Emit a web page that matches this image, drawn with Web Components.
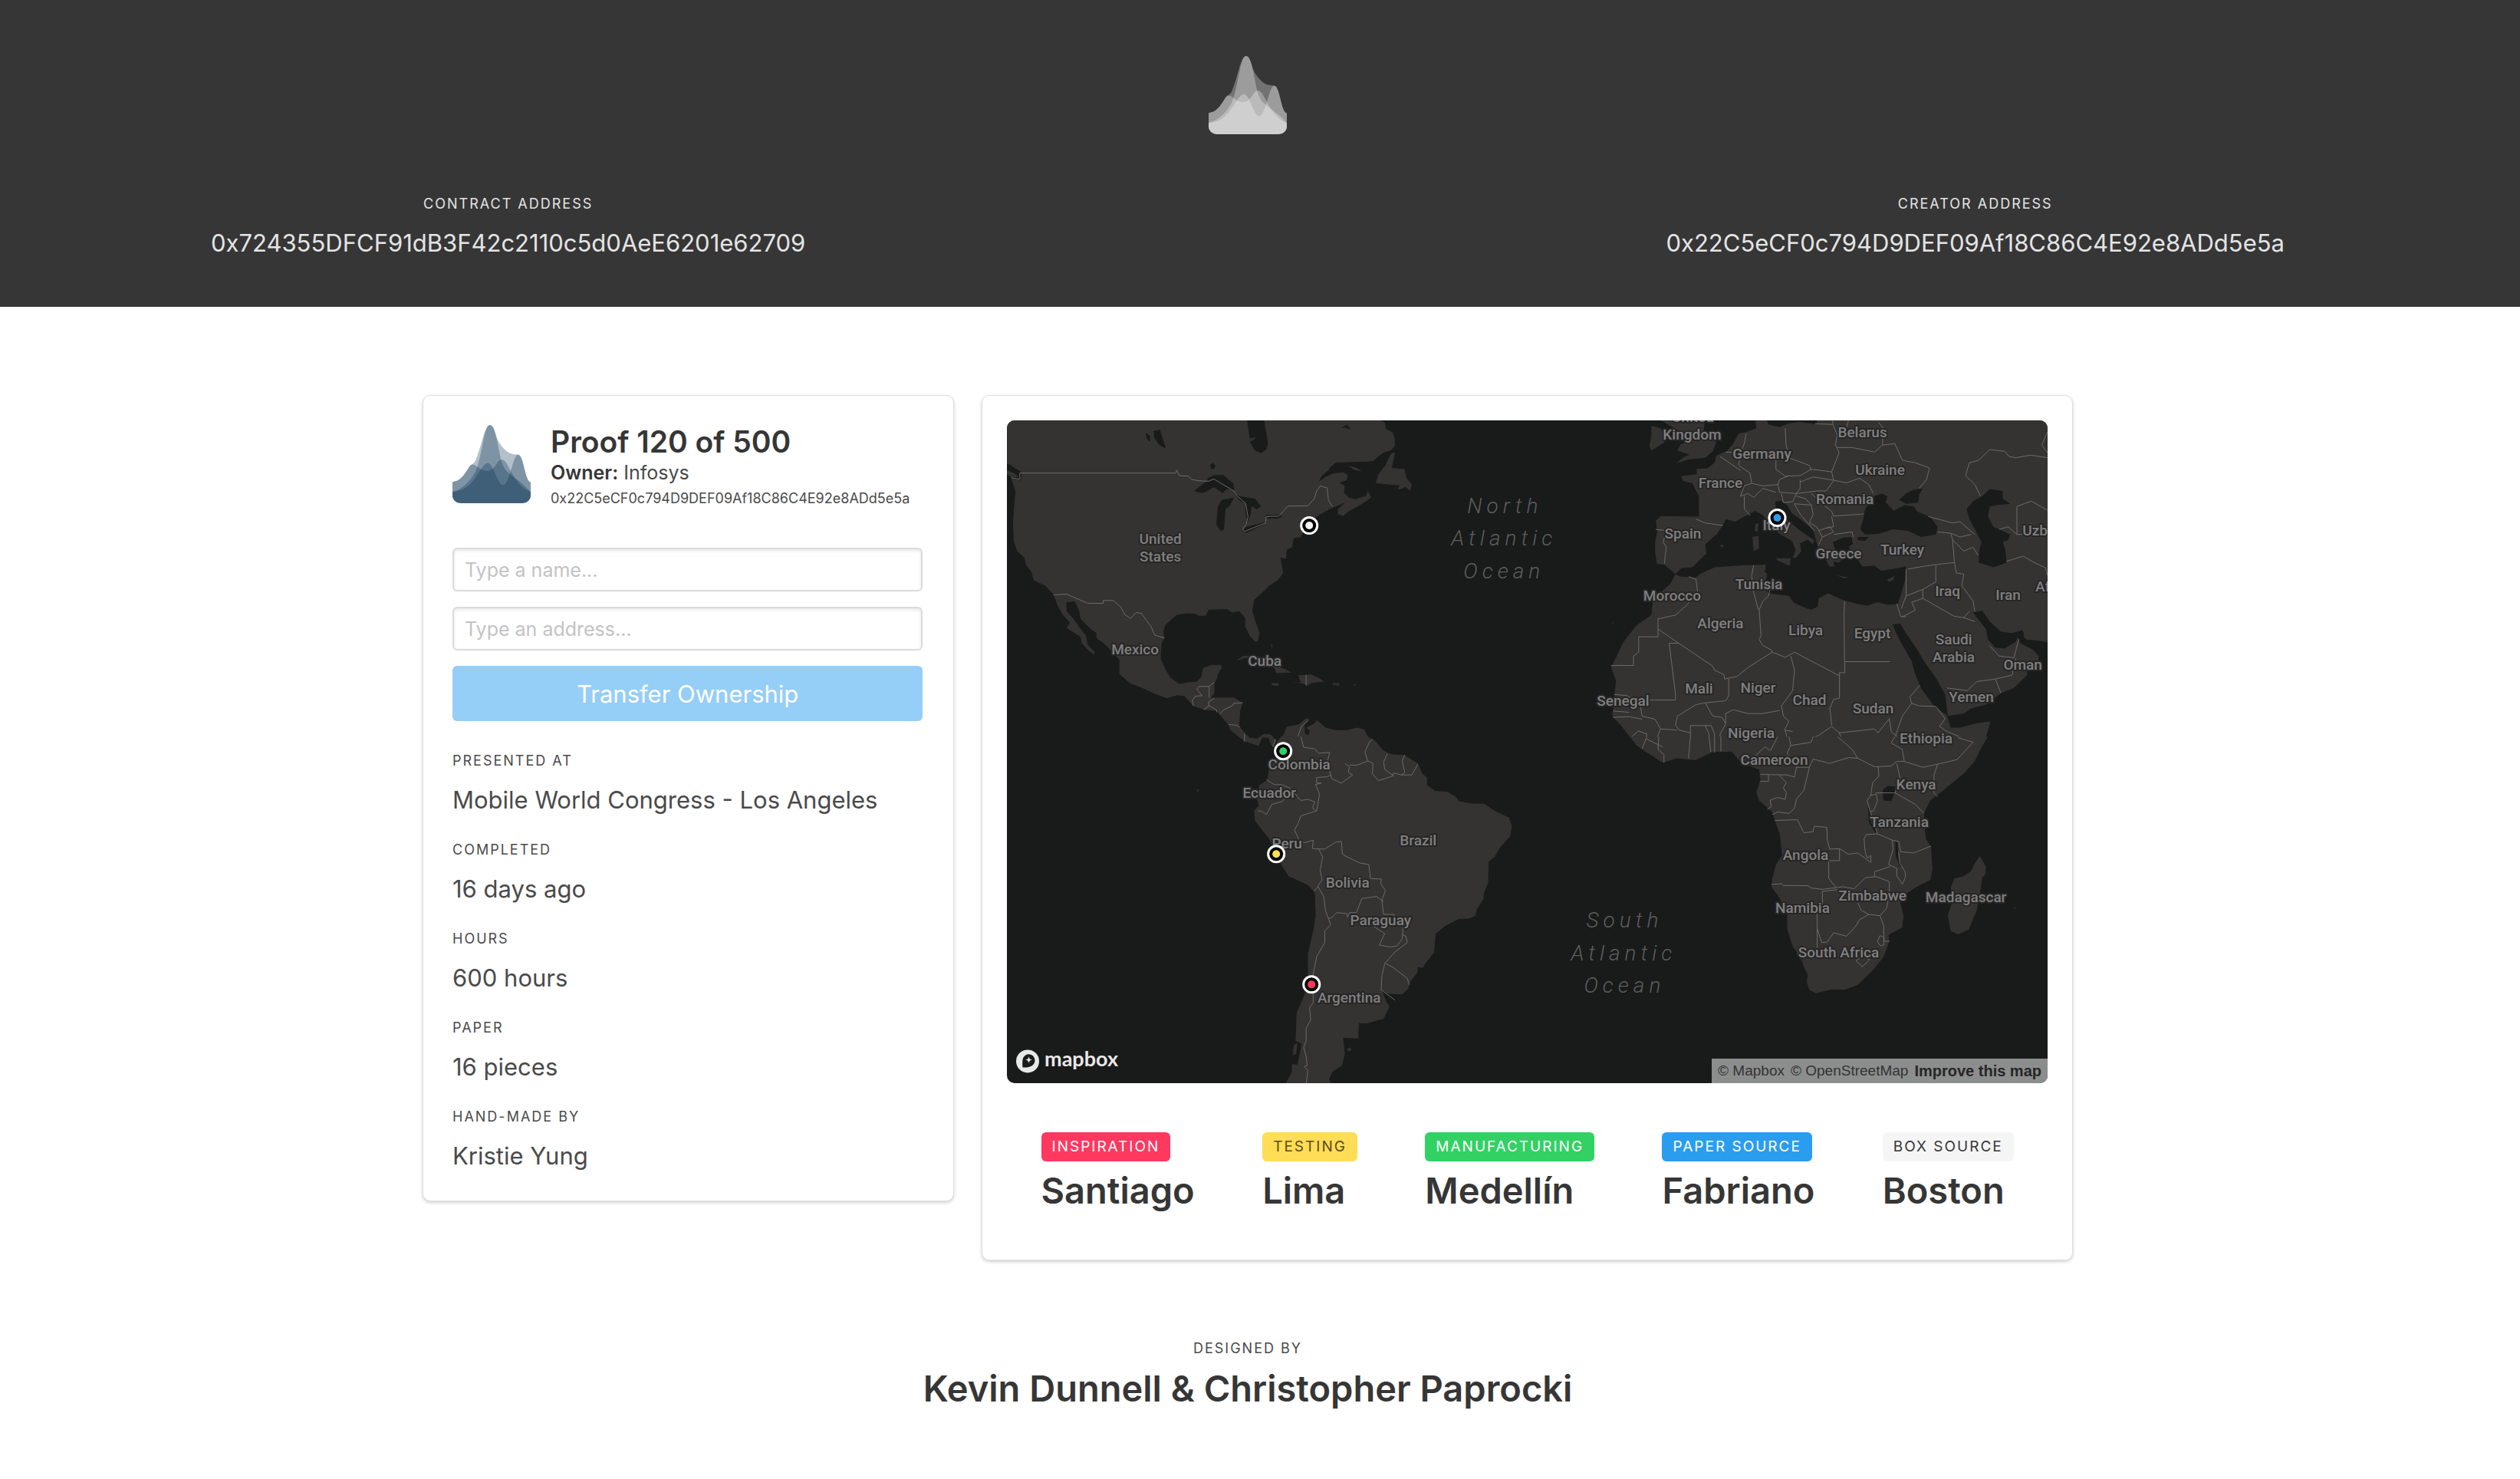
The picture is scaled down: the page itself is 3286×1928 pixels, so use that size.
<!DOCTYPE html>
<html lang="en">
<head>
<meta charset="utf-8">
<meta name="viewport" content="width=device-width, initial-scale=1">
<title>Proof 120 of 500</title>
<style>
  :root {
    --ink: #363636;
    --text: #4a4a4a;
    --gutter: 32px;
    --label-size: 18px;
    --value-size: 31px;
    --title-size: 47px;
  }
  body {
    margin: 0;
    background: #fff;
    color: var(--text);
    font-family: Inter, "Liberation Sans", sans-serif;
  }
  main {
    box-sizing: border-box;
    padding: 115px var(--gutter) 50px 0;
  }
</style>
</head>
<body>
<site-hero>
  <labeled-value centered label="Contract address">0x724355DFCF91dB3F42c2110c5d0AeE6201e62709</labeled-value>
  <labeled-value centered label="Creator address">0x22C5eCF0c794D9DEF09Af18C86C4E92e8ADd5e5a</labeled-value>
</site-hero>
<main>
  <proof-columns>
    <ui-card slot="side">
      <proof-head owner="Infosys" address="0x22C5eCF0c794D9DEF09Af18C86C4E92e8ADd5e5a">Proof 120 of 500</proof-head>
      <transfer-form></transfer-form>
      <fact-list>
        <labeled-value label="Presented at">Mobile World Congress - Los Angeles</labeled-value>
        <labeled-value label="Completed">16 days ago</labeled-value>
        <labeled-value label="Hours">600 hours</labeled-value>
        <labeled-value label="Paper">16 pieces</labeled-value>
        <labeled-value label="Hand-made by">Kristie Yung</labeled-value>
      </fact-list>
    </ui-card>
    <ui-card slot="main" wide>
      <journey-map></journey-map>
      <stop-list>
        <journey-stop tag="Inspiration" style="--tag:#ff3860;--tag-ink:#fff">Santiago</journey-stop>
        <journey-stop tag="Testing" style="--tag:#ffdd57;--tag-ink:#5a4c14">Lima</journey-stop>
        <journey-stop tag="Manufacturing" style="--tag:#32d164;--tag-ink:#fff">Medellín</journey-stop>
        <journey-stop tag="Paper source" style="--tag:#2b9dee;--tag-ink:#fff">Fabriano</journey-stop>
        <journey-stop tag="Box source" style="--tag:#f5f5f5;--tag-ink:#363636">Boston</journey-stop>
      </stop-list>
    </ui-card>
  </proof-columns>
  <site-credits label="Designed by">Kevin Dunnell &amp; Christopher Paprocki</site-credits>
</main>

<script>
const define = (name, html) => {
  const template = document.createElement('template');
  template.innerHTML = html;
  customElements.define(name, class extends HTMLElement {
    constructor() {
      super();
      this.attachShadow({ mode: 'open' }).append(template.content.cloneNode(true));
    }
    connectedCallback() {
      for (const node of this.shadowRoot.querySelectorAll('[data-attr]')) {
        node.textContent = this.getAttribute(node.dataset.attr) || '';
      }
    }
  });
};

/* Four translucent ridges stacked into one mountain. */
define('brand-mark', `
<style>
  :host { display: block; width: 102px; height: 102px; color: #022f50; }
  svg { display: block; width: 100%; height: 100%; }
</style>
<svg viewBox="108 68 306 308" preserveAspectRatio="none" aria-hidden="true">
  <clipPath id="base"><path d="M108 60H414V344A32 32 0 0 1 382 376H140A32 32 0 0 1 108 344Z"/></clipPath>
  <g fill="currentColor" fill-opacity=".3" clip-path="url(#base)">
    <path d="M108 292C142 290 160 254 174 232C182 220 190 226 200 204C222 150 234 68 254 68C276 68 272 112 294 142C314 172 332 184 362 184C388 184 390 288 414 293V376H108Z"/>
    <path d="M108 292C142 290 160 254 174 232C194 206 208 250 244 249C276 248 282 204 300 204C318 204 330 242 344 264C364 298 384 318 414 332V376H108Z"/>
    <path d="M108 332C150 318 186 286 204 236C226 176 232 68 254 68C282 68 288 190 306 228C324 268 362 272 414 332V376H108Z"/>
    <path d="M108 330C152 330 178 306 204 266C220 242 232 218 247 218C268 218 284 304 306 304C332 304 344 184 365 184C388 184 390 288 414 293V376H108Z"/>
  </g>
</svg>`);

define('labeled-value', `
<style>
  :host { display: block; }
  :host([centered]) { text-align: center; }
  dl, dd { margin: 0; }
  dt { font-size: var(--label-size); line-height: 28px; letter-spacing: 2px; text-transform: uppercase; margin-bottom: 13px; }
  dd { font-size: var(--value-size); line-height: 48px; }
</style>
<dl><dt data-attr="label"></dt><dd><slot></slot></dd></dl>`);

define('site-hero', `
<style>
  :host { display: block; }
  header { display: flex; flex-direction: column; align-items: center; gap: 77px; padding: 73px var(--gutter) 59px 0; background: #363636; color: #e4e4e4; }
  brand-mark { color: #fff; }
  .level { box-sizing: border-box; width: 100%; display: flex; justify-content: space-between; padding: 0 275px; }
</style>
<header>
  <brand-mark></brand-mark>
  <div class="level"><slot></slot></div>
</header>`);

define('proof-columns', `
<style>
  :host { display: grid; grid-template-columns: calc((100% + 36px) / 3 - 36px) 1fr; gap: 36px; align-items: start; max-width: 2152px; margin: 0 auto; }
</style>
<slot name="side"></slot><slot name="main"></slot>`);

define('ui-card', `
<style>
  :host { display: block; box-sizing: border-box; min-width: 0; border: 1px solid #dedede; border-radius: 10px; background: #fff; padding: 38px 40px 34px 38px; box-shadow: 0 2px 4px rgba(0,0,0,.18); }
  :host([wide]) { padding: 32px 32px 60px; }
</style>
<slot></slot>`);

define('proof-head', `
<style>
  :host { display: flex; gap: 26px; margin-bottom: 48px; }
  brand-mark { flex: none; }
  h1, p { margin: 0; }
  h1 { font-size: 39px; line-height: 44px; font-weight: 600; color: var(--ink); }
  .owner { font-size: 25px; line-height: 36px; }
  .address { font-size: 18px; line-height: 32px; }
  strong { font-weight: 600; color: var(--ink); }
</style>
<brand-mark></brand-mark>
<div>
  <h1><slot></slot></h1>
  <p class="owner"><strong>Owner:</strong> <span data-attr="owner"></span></p>
  <p class="address" data-attr="address"></p>
</div>`);

define('transfer-form', `
<style>
  :host { display: block; margin-bottom: 38px; }
  form { display: flex; flex-direction: column; gap: 20px; }
  input, button { box-sizing: border-box; width: 100%; border-radius: 6px; font-family: inherit; margin: 0; }
  input { height: 57px; border: 2px solid #dbdbdb; padding: 0 14px; font-size: 25px; color: var(--ink); background: #fff; box-shadow: inset 0 2px 4px rgba(10,10,10,.1); }
  input::placeholder { color: #c3c3c3; opacity: 1; }
  button { height: 72px; border: 0; padding: 0; background: #95cef6; color: #fff; font-size: var(--value-size); }
</style>
<form>
  <input type="text" aria-label="Name" placeholder="Type a name...">
  <input type="text" aria-label="Address" placeholder="Type an address...">
  <button type="button">Transfer Ownership</button>
</form>`);

define('fact-list', `
<style>
  :host { display: flex; flex-direction: column; gap: 27px; }
</style>
<slot></slot>`);

define('stop-list', `
<style>
  :host { display: flex; justify-content: space-around; margin-top: 64px; }
</style>
<slot></slot>`);

define('journey-stop', `
<style>
  :host { display: flex; flex-direction: column; align-items: flex-start; gap: 8px; }
  .tag { padding: 0 14px; border-radius: 6px; background: var(--tag); color: var(--tag-ink); font-size: 19px; line-height: 38px; letter-spacing: 2px; text-transform: uppercase; }
  h2 { margin: 0; font-size: var(--title-size); line-height: 60px; font-weight: 600; color: var(--ink); }
</style>
<span class="tag" data-attr="tag"></span>
<h2><slot></slot></h2>`);

define('site-credits', `
<style>
  :host { display: block; margin-top: 101px; text-align: center; }
  p, h2 { margin: 0; }
  p { font-size: var(--label-size); line-height: 28px; letter-spacing: 2px; text-transform: uppercase; margin-bottom: 8px; }
  h2 { font-size: var(--title-size); line-height: 60px; font-weight: 600; color: var(--ink); }
</style>
<p data-attr="label"></p>
<h2><slot></slot></h2>`);

/* Country names: text, centre x, baseline y. */
const countries = [
  ['United', 200, 161], ['States', 200, 184], ['Mexico', 167, 305], ['Cuba', 336, 320],
  ['United', 894, 2], ['Kingdom', 893, 25], ['Belarus', 1115, 22], ['Germany', 984, 50],
  ['Ukraine', 1138, 71], ['France', 930, 88], ['Romania', 1092, 109], ['Italy', 1003, 143],
  ['Spain', 881, 154], ['Greece', 1084, 180], ['Turkey', 1167, 175], ['Uzb', 1340, 150],
  ['Tunisia', 980, 220], ['Morocco', 867, 235], ['Iraq', 1226, 229],
  ['Iran', 1305, 234], ['Af', 1350, 223], ['Algeria', 930, 271], ['Libya', 1041, 280],
  ['Egypt', 1128, 284], ['Saudi', 1234, 292], ['Arabia', 1234, 315], ['Oman', 1324, 325],
  ['Mali', 902, 356], ['Niger', 979, 355], ['Chad', 1046, 371], ['Senegal', 803, 372],
  ['Sudan', 1129, 382], ['Yemen', 1257, 367], ['Nigeria', 970, 414], ['Ethiopia', 1198, 421],
  ['Cameroon', 1000, 449], ['Kenya', 1185, 481], ['Tanzania', 1163, 530], ['Angola', 1041, 573],
  ['Zimbabwe', 1128, 626], ['Namibia', 1037, 642], ['Madagascar', 1250, 628], ['South Africa', 1084, 700],
  ['Colombia', 381, 455], ['Ecuador', 342, 492], ['Peru', 365, 558], ['Brazil', 536, 554],
  ['Bolivia', 444, 609], ['Paraguay', 487, 658], ['Argentina', 446, 759]
];
const oceans = [
  ['North', 649, 121], ['Atlantic', 648, 163], ['Ocean', 648, 206],
  ['South', 805, 661], ['Atlantic', 804, 704], ['Ocean', 805, 746]
];
const pins = [
  [394, 137, '#f5f5f5'], [1004, 127, '#2b9dee'], [360, 431, '#32d164'], [351, 565, '#ffdd57'], [397, 735, '#ff3860']
];
const texts = list => list.map(([t, x, y]) => `<text x="${x}" y="${y}">${t}</text>`).join('');

define('journey-map', `
<style>
  :host { display: block; position: relative; overflow: hidden; border-radius: 10px; background: #191a1a; }
  svg { display: block; }
  .map { width: 100%; height: auto; }
  .land { fill: #343332; }
  .water { fill: #191a1a; }
  .border { fill: none; stroke: #6c6b6a; stroke-width: 1; }
  .land, .water, .border { vector-effect: non-scaling-stroke; }
  .country text { font: 500 19px Roboto, sans-serif; fill: #7f7f7f; stroke: #272626; stroke-width: 4px; stroke-linejoin: round; paint-order: stroke; text-anchor: middle; }
  .ocean text { font: italic 300 28px Roboto, sans-serif; letter-spacing: 6px; fill: #5c5d5d; text-anchor: middle; }
  .brand { font: 700 27px Lato, sans-serif; fill: #e8e8e8; }
  .credit { position: absolute; right: 0; bottom: 0; display: flex; gap: 8px; padding: 0 8px; background: #8c8d8d; font: 19px/32px "Liberation Sans", Arial, sans-serif; }
  .credit a { color: #333; text-decoration: none; }
  .credit span { display: flex; gap: 8px; }
  .credit a.fix { font-size: 20px; font-weight: 700; color: #262626; }
</style>
<svg class="map" viewBox="0 0 1356 864" role="img" aria-label="Map of the journey">
  <!-- North America, Caribbean -->
  <svg x="-44" y="-48" width="720" height="480" viewBox="0 0 1568 1440" preserveAspectRatio="none">
    <path class="land" d="M96 140H1150L1168 152 1172 178 1190 190 1197 215V245L1185 262 1165 270 1150 285 1135 303 1120 305 1030 309 1015 325 1008 340 990 360 980 384 1000 365 1025 350 1050 347 1063 358 1060 378 1040 388 1055 400 1052 425 1065 445 1085 452 1100 445 1115 440 1120 420 1130 445 1110 465 1085 485 1065 500 1050 518 1035 510V492L1055 465 1035 478 1020 485 1000 500 980 515 945 560 930 600 910 605 905 640 890 650 888 685 872 680 880 740 865 768 840 790 815 825 798 845 792 885 800 925 813 975 808 1008 800 1010 785 985 772 950V915L755 890 735 895 720 882 668 884 660 908 640 908 630 900 605 898 578 905 560 925 545 945 540 970 543 993 535 1015 532 1075 545 1115 560 1150 585 1175 610 1168 635 1165 648 1145 652 1112 675 1100 705 1100V1112L695 1135 690 1160 685 1170V1210L675 1228 740 1227 765 1248 758 1280 755 1338 770 1365 785 1385 805 1388 825 1370 845 1372 860 1395 855 1425 845 1412 838 1385 820 1385 810 1418 800 1412 770 1398 730 1355 725 1335 700 1295 690 1280 655 1275 625 1260 600 1222 580 1218 550 1230 515 1212 480 1190 445 1172 415 1135V1080L400 1055 370 1015 350 995V975L330 955 305 920 300 885 288 852 265 855V890L285 920 300 950 320 985 325 1020 345 1050 343 1060 325 1040 308 1015 305 990 265 955 275 935 255 905 240 870 228 825 205 790 172 770 165 735 150 710 145 680 125 655 115 615 113 540 120 420 108 370 135 378 137 352 103 316 96 316Z"/>
    <path class="land" d="M90 335L118 352 130 366 108 366 90 350ZM1062 320L1085 328 1103 342 1085 340ZM1142 390L1150 355 1170 320 1185 275 1197 268 1193 300 1188 330 1225 335 1230 370 1245 395 1240 420 1228 405 1205 415 1210 398 1180 395ZM745 1084L765 1065 800 1062 835 1085 870 1108 905 1130 860 1132 855 1112 820 1092 790 1070 765 1075ZM905 1168L930 1168 922 1140 960 1137 980 1150 997 1165 960 1170 948 1183 935 1172ZM845 1170L868 1172 865 1182 850 1180ZM1020 1170L1040 1172 1038 1180 1022 1178ZM845 1018L850 1022 848 1035ZM1080 1176H1085V1180H1080Z"/>
    <path class="land" d="M855 1440L862 1400 880 1375 890 1342 925 1332 945 1308 955 1312 940 1335 942 1368 950 1376 956 1358 945 1345 970 1328 975 1315 1000 1345 1030 1355 1060 1355 1090 1345 1110 1352 1120 1380 1140 1395 1168 1440Z"/>
    <path class="water" d="M777 140L785 215 803 210 795 222 785 228 800 262 817 272 832 258 837 235 825 140ZM512 185L530 180 537 210 547 254 528 240 514 212ZM490 192L502 205V228L492 215ZM673 318L680 310 688 322 683 335 674 332ZM627 420L650 395 665 380 665 370 685 358 710 358 738 390 742 418 720 412 708 428 683 405 665 420 650 428ZM695 480L705 455 740 446 730 475 716 490 712 570 703 578 690 550ZM740 425L755 440 800 450 817 480 805 492 790 478 788 510 778 545 772 500V470L755 455ZM763 575L775 560 800 552 830 540 825 552 775 584ZM830 515L870 512 878 520 865 528 832 528ZM1045 175L1060 160 1072 180 1055 172ZM105 318L135 345 137 378 128 375 128 355Z"/>
    <path class="border" d="M108 368L133 374 132 350H575L578 338 585 360 610 362 620 375 640 380 668 382 683 373 740 420 750 440 773 468 780 520 775 550 765 570 770 578 830 545 832 520 868 518 893 479 950 478 968 450 975 420 985 400 1005 408 1008 455 1020 482M228 826L265 823 325 859H369V848H398L420 875 430 903 447 918 462 895 477 898 505 950 515 983 543 995M625 1260L622 1240 630 1222 650 1220 635 1195 642 1184H670V1228M670 1182L685 1168M655 1275L670 1258 668 1245 685 1230M668 1258L690 1275 692 1285M700 1292L712 1275 735 1260 740 1250 765 1248M725 1333L745 1335 757 1342M770 1368V1400M850 1420L858 1390M945 1140V1178M950 1318L932 1340 922 1378 935 1412 965 1425 975 1440M1133 1392L1120 1412 1115 1440"/>
  </svg>
  <!-- Europe, North Africa, Middle East -->
  <svg x="646" y="-48" width="760" height="480" viewBox="0 0 1568 1440" preserveAspectRatio="none">
    <path class="land" d="M680 140L682 175 655 190 635 195 620 235 605 262 575 282 570 310 550 332 522 333V355L480 362 485 380 510 390 528 440V520L425 518 412 535 416 580 410 620V660L415 705 435 708 465 745 450 785 405 840 400 905 360 945 325 1010 292 1110 305 1160 300 1230 295 1300 320 1340 350 1395 385 1440H1280L1300 1380 1312 1320 1275 1328 1230 1345 1205 1345 1195 1300 1240 1290 1260 1270 1300 1255 1340 1210 1375 1190 1410 1140 1412 1110 1440 1090 1442 1065 1425 1040 1392 1015 1385 990 1398 985 1408 1000 1465 1010H1568V140Z"/>
    <path class="water" d="M465 745L480 722 510 718 530 690 548 665 545 628 575 590 592 555 600 530 625 540 650 520 680 498 700 515 725 565 750 592 778 615 788 650 780 682 790 680 803 655 800 625 820 610 835 628 838 612 805 580 775 545 752 515 735 485 733 462 748 458 765 475 780 510 805 535 835 572 842 610 850 650 865 680 880 715 892 715 890 695 905 700 910 690 895 655 888 620 915 603 938 600 942 625 930 640 950 665 955 690 968 715 1000 712 1018 732 1050 725 1085 715 1082 770 1072 820 1062 862 1035 865 1010 855 980 868 950 860 918 848 875 820 850 840 847 872 830 885 805 872 782 855 770 830 715 820 705 795 712 745 705 735 708 708 650 710 570 718 530 745 520 758 480 755ZM962 570L970 530 975 490 1000 440 1020 430 1035 440 1030 465 1052 497 1080 475 1105 480 1115 500 1150 522 1170 560 1165 590 1125 600 1090 575 1050 570 1010 588 975 590ZM1066 455L1085 430 1105 415 1130 410 1120 435 1118 465 1085 470ZM955 600L985 600 975 615 955 612ZM1248 490L1265 460 1290 440 1310 412 1345 420V450L1365 470 1330 475 1310 480 1305 520 1320 560 1335 570 1365 590 1360 610 1345 620 1352 650 1355 700 1320 718 1280 700 1282 650 1288 620 1270 570 1255 530ZM710 140L715 160 745 170 770 155 800 150 845 160V140ZM1265 895L1290 888 1310 930 1340 970 1370 975 1398 963 1403 985 1385 992 1380 1010 1350 1035 1325 1032 1305 1000 1300 960ZM1048 942L1070 938 1082 970 1115 1040 1135 1090 1165 1150 1190 1215 1197 1300 1160 1260 1125 1190 1108 1130 1100 1085 1070 1010Z"/>
    <path class="land" d="M400 165L425 175 437 200 435 230 400 262 395 245 400 200ZM420 140L545 140 540 190 575 230 565 265 545 290 500 297 467 312 485 290 502 278 470 262 480 235 505 230 500 205 480 190ZM735 683L775 683 772 712 740 692ZM672 600L688 595 690 645 675 655ZM680 550L688 545 686 580 678 575ZM898 750L930 758 920 762ZM1033 768L1055 752 1050 768 1040 775ZM583 635L592 630 595 640ZM295 935H299V938H295Z"/>
    <path class="border" d="M760 175L762 235 770 290 825 320 830 340M840 157L888 160 900 200 895 240 905 270 885 345M888 145V160M900 250L940 250 1000 268 1022 240V215L1035 195 1010 150M930 145L925 170M1022 240L1055 235 1075 300 1110 310 1148 330 1140 375 1120 410M655 195L650 235 640 270 635 320 665 350 670 390 650 400 640 440M600 268L645 270M585 285L610 310 640 340M735 300V335L760 362 800 360 830 335 885 345 890 378M670 390L700 400 740 395 745 375 770 360M740 395L745 425 790 430 800 410V375M800 385L835 365 890 378 925 388 960 370 985 395 997 430M890 380L870 420 845 420 790 430M640 440L660 430 675 445 700 410 735 425M650 440V490L665 515M520 530L545 545 592 555M412 570L440 575 432 620 440 640 435 705M750 430L755 465 780 462 790 430M785 470L830 475 835 510 825 545M785 470L800 510 838 575M830 430L860 470 885 500 890 518 970 510M885 518L890 560 870 565M830 475L815 450 790 440M825 545L845 560 860 600 850 630M850 575L880 560 890 580 860 600M890 590L940 580 943 600M1465 190L1450 240 1465 270M1465 290L1420 280 1380 290 1362 285 1350 265 1310 258 1280 300 1255 310 1245 360 1270 395 1285 440M1383 590V480L1422 460 1465 495M1335 570L1360 560 1383 590H1420V545M1355 695L1400 675 1430 700 1460 720 1465 750M1145 520L1210 545 1230 540 1270 590M1170 580L1205 585 1230 600 1260 590M1205 585L1210 610 1240 655 1265 640 1278 670M1210 610L1215 700M1090 725L1130 715 1180 705 1215 700 1220 740 1240 745 1235 790 1265 850 1270 890M1165 710V775L1130 805 1085 830M1085 725V830L1072 880M1130 805V840L1100 855 1110 885 1075 912M1130 840L1215 910 1240 915 1270 930M1240 915L1255 890M1060 860L1070 910 1085 912M1195 1190L1250 1200 1275 1165 1325 1155 1340 1210M1325 1155L1370 1140 1380 1075M1310 1025L1335 1065 1375 1072 1388 1000M500 755L520 765 525 820 492 870 465 905 418 920V990H366V1050L352 1065V1102H292M418 960L565 1105 570 1120 595 1138 597 1155 630 1145 660 1110 725 1050M475 1015H448L465 1215V1237H395M675 710L670 750 672 800 688 885M720 800L715 830 700 850 690 885 695 985 690 1000 700 1025 722 1040 725 1050 760 1070 785 1050 905 1142M920 850L918 900 920 1130H906V1230L890 1235 880 1270 885 1335M920 1087H1042M608 1155V1220L600 1240 545 1248 520 1255 470 1300 465 1335 475 1355 505 1365V1337H560M545 1248L565 1300 590 1305 600 1330V1290L620 1275 660 1290 700 1290 745 1278M775 1065L785 1120 780 1200 750 1260 755 1300 770 1320 758 1355 780 1360M760 1355L770 1412 800 1405 850 1375 885 1340 905 1365 940 1360 1000 1350 1010 1365 1040 1310 1045 1360 1060 1380M1122 1180L1095 1225 1100 1250 1075 1300 1058 1370V1400M1100 1250L1120 1260 1165 1262 1190 1310 1175 1340 1195 1360 1265 1403 1240 1440M300 1215L335 1220 370 1250 375 1300 410 1312 425 1350 470 1355M297 1305L340 1302 375 1312M297 1280L340 1285M348 1380L365 1358 388 1370 385 1410M425 1350L415 1385 425 1440M505 1365V1440M545 1337L555 1370V1440M560 1335L570 1370V1440M600 1330L585 1370 587 1440M905 1365L915 1400 940 1440"/>
  </svg>
  <!-- South America -->
  <svg x="-44" y="412" width="720" height="480" viewBox="0 0 1568 1440" preserveAspectRatio="none">
    <path class="land" d="M872 0H1120L1135 15 1165 55 1190 70 1225 72 1262 105 1275 145 1288 160V190L1312 213 1345 215 1370 235 1378 252 1415 262 1450 262 1480 290 1518 315 1529 350 1525 385 1495 435 1480 470 1463 490 1462 570 1450 610 1448 635 1430 675 1425 700 1410 711 1378 713 1340 740 1313 770 1308 845 1285 885 1275 905 1262 900 1262 920 1240 960 1235 985 1218 1008 1175 1005 1160 992 1172 1035 1182 1055 1165 1103 1118 1121 1095 1120 1093 1180 1050 1178 1055 1240 1047 1285 1020 1310 1010 1340 1018 1360V1440H885V1360L905 1310V1280L920 1282 930 1220 932 1200 915 1190 918 1080 940 1010 950 960V850L965 760 972 700 970 610 950 580 895 545 878 510 860 460 840 400 800 330 797 290 810 270 805 240 812 190 835 170 840 120 858 90 865 40ZM907 1245L910 1205 920 1198 917 1240ZM636 205H640V217H636ZM1060 1222L1070 1215 1074 1225 1066 1230Z"/>
    <path class="border" d="M930 0L938 42 970 48 980 65 1012 62 1005 100 1018 165 1045 182 1077 150 1065 140 1068 118 1055 105M1015 150L1005 157 975 160V182H988L972 187 983 225 975 290 930 310 922 340 912 365 925 405 940 415 965 405 963 438 997 440 1030 412 1045 410 1048 460 1065 473 1100 495 1123 500 1128 555 1158 557 1157 575 1170 602 1160 640 1165 695 1195 695 1197 720M832 168L855 188 875 188 905 205 920 235 930 250 950 245 970 255 963 280 975 290M808 290L820 292 832 305 848 265 875 255 900 225M980 437L992 470 985 520 990 560 978 585 995 625 1000 680 1008 710 1018 708 1032 688 1060 692 1063 705 1068 688 1088 688 1103 633 1145 625 1165 645M1008 710L1015 735 998 760V805L975 860 965 930V1040L955 1060 958 1108 945 1140V1190L938 1215 945 1250 948 1285 940 1290 950 1305 945 1360M1135 740L1168 770 1153 815 1185 823 1203 818 1218 790 1220 745M1218 775L1228 780 1232 805 1195 845 1168 888 1160 935 1158 990 1197 1030M1168 885L1195 905 1232 945 1238 970M968 604L980 585M1068 112L1090 112 1120 95 1112 60 1125 20 1133 12M1120 95L1135 105 1133 145 1150 172 1190 155 1193 142 1215 150 1245 150 1262 108M1175 68L1165 100 1168 128 1195 155M1225 72L1218 95 1225 140 1215 150"/>
  </svg>
  <!-- Southern Africa -->
  <svg x="646" y="412" width="760" height="480" viewBox="0 0 1568 1440" preserveAspectRatio="none">
    <path class="land" d="M345 0L360 35 430 102 468 85 518 92 565 60 615 57 640 100 690 130 693 170 682 220 690 250 725 295 735 340 745 380 750 440 752 465 735 500 724 560V590L740 620 765 690V750L780 820 800 860 810 900 820 930 818 960 825 990 842 1003 885 988 920 990 955 970 995 915 1025 860 1040 800 1038 775 1075 745 1078 700 1068 640 1090 610 1110 590 1150 560 1156 520 1152 430 1138 400 1135 350 1133 300 1150 250 1185 210 1240 145 1270 95 1285 50 1305 0ZM1283 467L1300 510 1298 540 1290 550 1285 600 1275 680 1253 755 1225 773 1205 760 1197 700 1210 640 1205 590 1215 555 1240 545 1260 525 1268 500ZM0 312L17 315 25 350 20 390 0 422ZM1374 667H1380V671H1374Z"/>
    <path class="water" d="M1022 210L1035 193 1055 195V220L1045 252 1024 250ZM982 270L988 290 990 335 1006 372 1003 378 985 335ZM1056 410L1062 412 1064 470 1072 505 1068 508 1057 465Z"/>
    <path class="border" d="M388 0L375 48M388 10L430 40M420 0L418 50 434 70V102M505 0L500 85M555 0L560 60M570 0V62M587 0V58M740 0L720 55 705 40 680 75V100M770 0L775 35 765 65 790 120 785 158 765 150 693 148M775 35L830 22 835 0M900 0L940 50 955 85 930 82 880 105 835 88 825 120 790 120M825 120L810 210 790 245 785 280 770 300 740 295 725 305M693 175H715V150M745 152L763 180 755 200 763 220 760 245 740 238 720 248 722 275 712 285M732 328L793 325 810 376 835 372 838 350 872 355 873 405 880 440 906 438V485H877V555L897 590M906 438L930 460 955 455 990 492V465L980 475 975 450 972 400 978 383 1008 380 1048 405M955 85L1000 118 1045 115 1060 97 1080 97 1075 50 1045 25 1055 0M1080 97L1130 120 1170 108 1222 90 1265 22 1225 5M1170 108L1160 150V220L1170 235M1060 105L1070 170 1055 220 1110 265 1133 300M1003 220H1055M1010 118L1012 155 995 180 990 230 980 250 988 290 1008 380M990 230L1005 225 1008 250 998 290 990 292M1048 405L1065 410 1070 450 1105 455 1152 428M1048 405L1050 440 1038 500 1060 515V545L1075 577 1083 550 1083 530 1068 495 1065 450M1043 508L1000 528V548L975 552 945 595M1000 545L1040 567V610L1033 670 1015 700 985 695 965 680 955 650M722 578L750 575 755 582 822 583 830 592 860 597 915 587 945 595M860 690V605L900 598M860 690H846V825M846 750L858 805 873 803 890 767 925 780 950 740 960 715 985 695M1015 700L1025 740V800H1040M1008 800L1015 778 1026 785 1025 815 1015 818ZM950 875L968 862 987 872 967 900ZM792 850L800 835"/>
  </svg>
  <g class="ocean">${texts(oceans)}</g>
  <g class="country">${texts(countries)}</g>
  ${pins.map(([x, y, c]) => `<g><circle cx="${x}" cy="${y}" r="12" fill="#fff"/><circle cx="${x}" cy="${y}" r="9" fill="#000"/><circle cx="${x}" cy="${y}" r="5" fill="${c}"/></g>`).join('')}
  <circle cx="27" cy="835" r="15" fill="#e8e8e8"/>
  <path d="M20.500 843C20 840 20 837 20.500 833A8 8 0 1 1 31 841.500C28 843 24 843.500 20.500 843Z" fill="#191a1a"/>
  <path d="M28.500 829L29.700 832 32.700 833.200 29.700 834.400 28.500 837.400 27.300 834.400 24.300 833.200 27.300 832Z" fill="#e8e8e8"/>
  <text class="brand" x="49" y="842">mapbox</text>
</svg>
<div class="credit">
  <span><a href="#mapbox">© Mapbox</a><a href="#osm">© OpenStreetMap</a></span>
  <a class="fix" href="#improve">Improve this map</a>
</div>`);
</script>
</body>
</html>
